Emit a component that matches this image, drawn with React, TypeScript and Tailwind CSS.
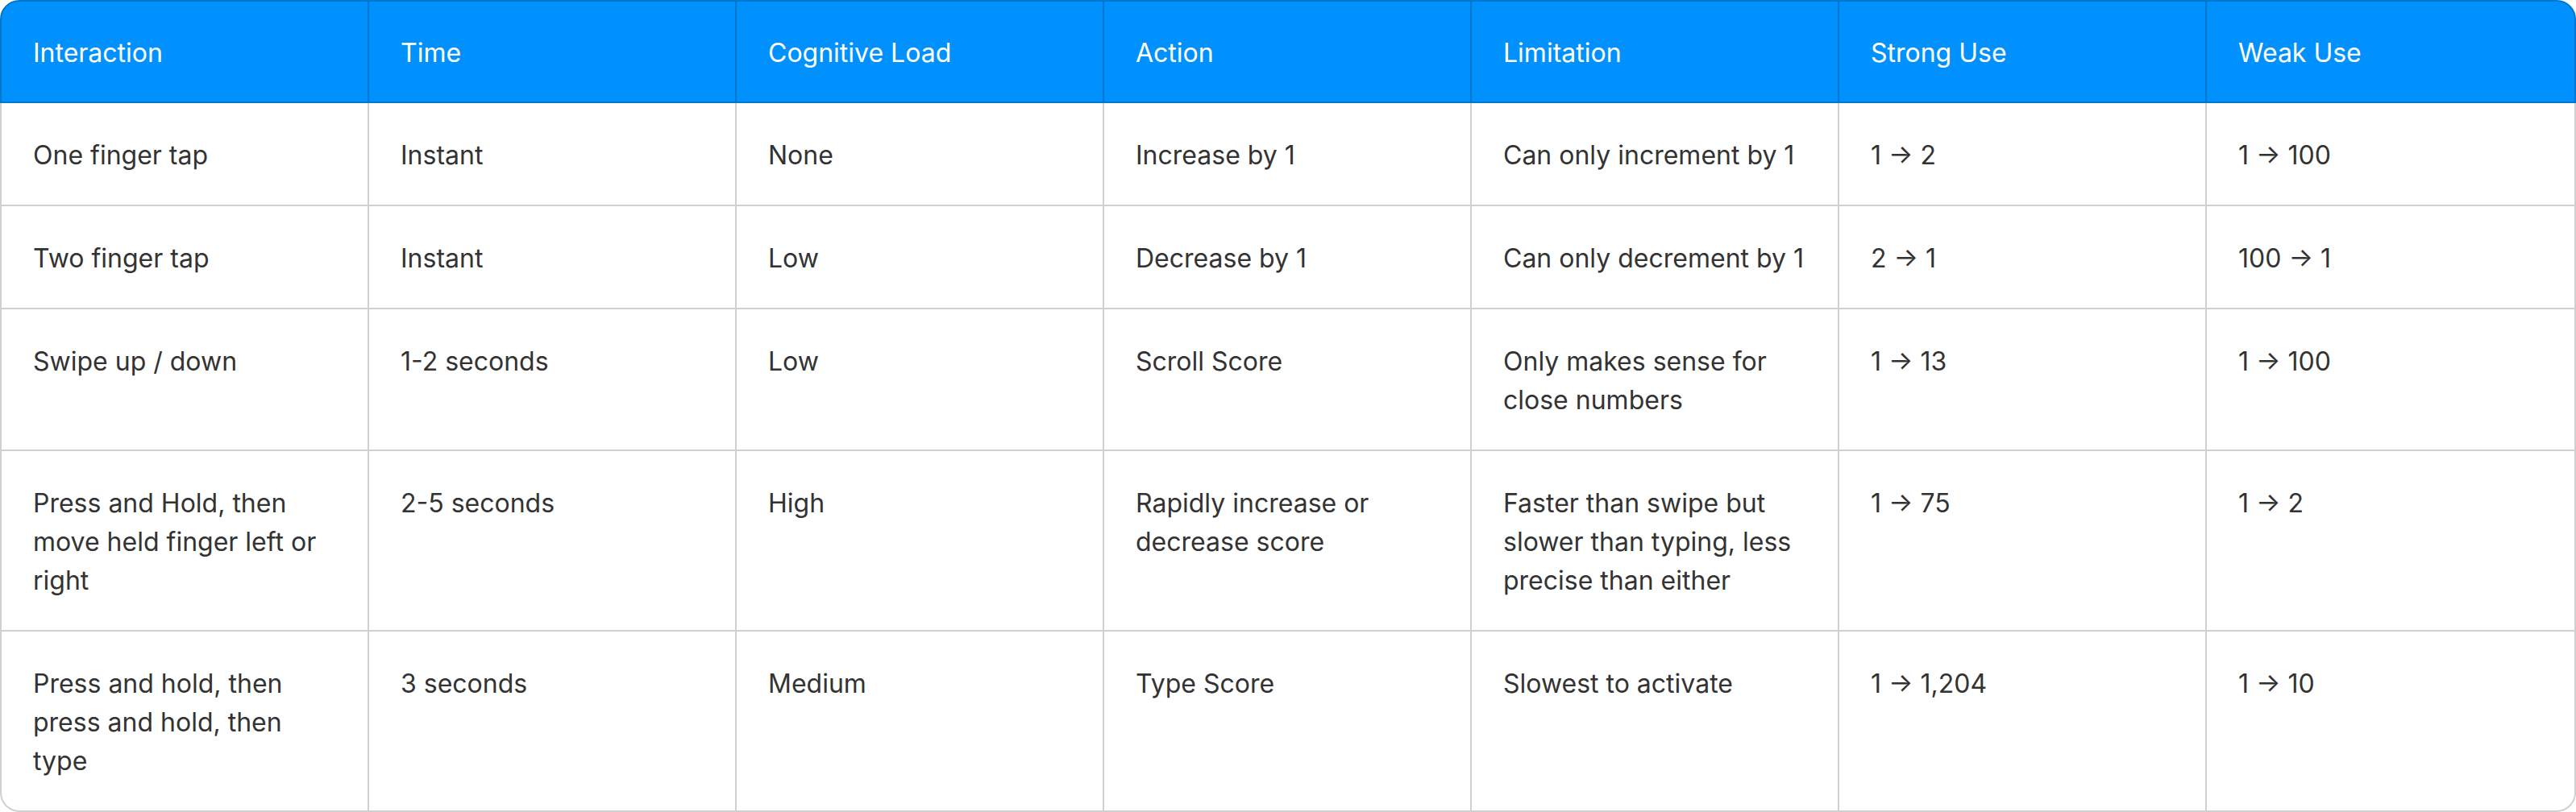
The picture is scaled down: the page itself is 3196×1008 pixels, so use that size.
import React from 'react';

const headers = ['Interaction', 'Time', 'Cognitive Load', 'Action', 'Limitation', 'Strong Use', 'Weak Use'];

const rows: string[][] = [
  ['One finger tap', 'Instant', 'None', 'Increase by 1', 'Can only increment by 1', '1 → 2', '1 → 100'],
  ['Two finger tap', 'Instant', 'Low', 'Decrease by 1', 'Can only decrement by 1', '2 → 1', '100 → 1'],
  ['Swipe up / down', '1-2 seconds', 'Low', 'Scroll Score', 'Only makes sense for close numbers', '1 → 13', '1 → 100'],
  [
    'Press and Hold, then move held finger left or right',
    '2-5 seconds',
    'High',
    'Rapidly increase or decrease score',
    'Faster than swipe but slower than typing, less precise than either',
    '1 → 75',
    '1 → 2',
  ],
  ['Press and hold, then press and hold, then type', '3 seconds', 'Medium', 'Type Score', 'Slowest to activate', '1 → 1,204', '1 → 10'],
];

export default function App() {
  return (
    <div className="w-[3196px] h-[1008px] bg-white font-['Inter',sans-serif] text-[32px] leading-[48px]">
      {/* header */}
      <div className="grid grid-cols-7 rounded-t-[24px] border-2 border-[#0077cc] bg-[#0091ff] text-white">
        {headers.map((h, i) => (
          <div key={h} className={`px-[39px] pt-[40px] pb-[36px] ${i < 6 ? 'border-r-2 border-[#0077cc]' : ''}`}>
            {h}
          </div>
        ))}
      </div>

      {/* body */}
      <div className="rounded-b-[24px] border-x-2 border-b-2 border-[#d0d0d0] text-[#333333]">
        {rows.map((r, ri) => (
          <div key={ri} className={`grid grid-cols-7 ${ri < rows.length - 1 ? 'border-b-2 border-[#d0d0d0]' : ''}`}>
            {r.map((c, ci) => (
              <div key={ci} className={`px-[39px] pt-[41px] pb-[37px] ${ci < 6 ? 'border-r-2 border-[#d0d0d0]' : ''}`}>
                {c}
              </div>
            ))}
          </div>
        ))}
      </div>
    </div>
  );
}
